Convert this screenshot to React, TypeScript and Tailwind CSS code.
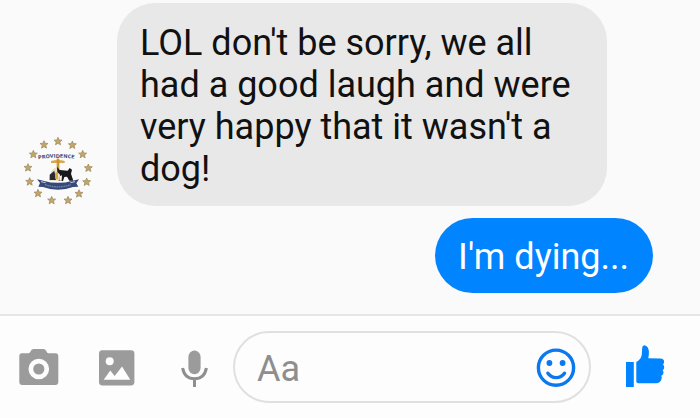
import { useState } from 'react';

type Message = {
  id: number;
  mine: boolean;
  text: string;
};

const messages: Message[] = [
  { id: 1, mine: false, text: "LOL don't be sorry, we all had a good laugh and were very happy that it wasn't a dog!" },
  { id: 2, mine: true, text: "I'm dying..." },
];

// centres of the thirteen stars around the seal
const stars = [
  [129, 46], [172, 57], [203, 85], [220, 126], [215, 168], [192, 203], [159, 223],
  [110, 223], [69, 202], [44, 167], [39, 125], [55, 85], [87, 56],
];

function SealAvatar() {
  return (
    <svg viewBox="24 30 210 210" className="h-[70px] w-[70px] shrink-0" role="img" aria-label="Providence">
      <path id="motto" d="M70 100 Q129 89 196 101" fill="none" />
      {stars.map(([x, y]) => (
        <path
          key={`${x}-${y}`}
          transform={`translate(${x} ${y})`}
          d="M0 -12 L3.3 -4.2 L12 -3.6 L5.4 2 L7.6 10.5 L0 6 L-7.6 10.5 L-5.4 2 L-12 -3.6 L-3.3 -4.2 Z"
          fill="#c4a762"
          stroke="#93835f"
          strokeWidth="2"
        />
      ))}
      <text fontSize="15" fontWeight="700" fill="#3f5380" fontFamily="'DejaVu Sans', sans-serif">
        <textPath href="#motto">PROVIDENCE</textPath>
      </text>
      <path d="M108 105 Q129 99 149 105 L149 111 L108 111 Z" fill="#d9a94c" />
      <path d="M125 98 H133 V134 H125 Z" fill="#c8963a" />
      <path d="M107 142 Q110 127 128 124 L131 164 H102 Z" fill="#e9dfc4" />
      <path d="M104 146 L118 134 L123 162 H104 Z" fill="#2b2b33" />
      <path d="M120 141 L129 138 L130 160 L121 159 Z" fill="#e2a93d" />
      <path d="M126 122 L134 132 L158 134 L164 126 L171 131 L168 143 L175 164 H163 L156 152 L148 153 L144 165 H131 L135 146 L127 138 Z" fill="#17171c" />
      <path d="M133 151 L141 148 L140 164 H133 Z" fill="#f6f1e2" />
      <path d="M66 160 L85 164 Q129 177 173 164 L192 160 L184 172 L190 182 L174 183 Q129 200 84 183 L70 182 L75 171 Z" fill="#35497a" />
      <path d="M90 176 Q129 189 168 176" fill="none" stroke="#7685a8" strokeWidth="4" strokeDasharray="5 2" />
      <path d="M78 167 L92 170 M166 170 L180 167" stroke="#c3cbdc" strokeWidth="3" />
    </svg>
  );
}

function CameraIcon() {
  return (
    <svg viewBox="0 0 40 40" className="h-10 w-10" aria-hidden="true">
      <path
        fill="#9b9b9b"
        fillRule="evenodd"
        d="M3 6.3 H9.5 Q11 6.3 11.5 4.5 Q12.2 2 14.5 2 H24.5 Q26.8 2 27.5 4.5 Q28 6.3 29.5 6.3 H36.3 Q39.3 6.3 39.3 9.3 V35 Q39.3 38 36.3 38 H3.3 Q0.3 38 0.3 35 V9.3 Q0.3 6.3 3 6.3 Z M19.8 11.7 A10.3 10.3 0 1 0 19.8 32.3 A10.3 10.3 0 1 0 19.8 11.7 Z"
      />
      <circle cx="19.8" cy="22" r="5.6" fill="#9b9b9b" />
    </svg>
  );
}

function PictureIcon() {
  return (
    <svg viewBox="0 0 40 40" className="h-10 w-10" aria-hidden="true">
      <rect x="2" y="3.3" width="35.4" height="35.2" rx="3.4" fill="#9b9b9b" />
      <circle cx="12.7" cy="14.3" r="4" fill="#fdfdfd" />
      <path d="M6.7 32.7 L13.3 23.5 L17.7 29 L25 19.5 L33.3 32.7 Z" fill="#fdfdfd" />
    </svg>
  );
}

function MicIcon() {
  return (
    <svg viewBox="0 0 40 40" className="h-10 w-10" aria-hidden="true">
      <rect x="13.4" y="3.6" width="12.2" height="23.6" rx="6.1" fill="#9b9b9b" />
      <path d="M7.6 21 C9 28.6 13.4 31.8 19.5 31.8 C25.6 31.8 30 28.6 31.4 21 M19.5 31.8 V40" fill="none" stroke="#8f8f8f" strokeWidth="3" />
    </svg>
  );
}

function SmileIcon() {
  return (
    <svg viewBox="0 0 40 40" className="h-10 w-10" aria-hidden="true">
      <g fill="none" stroke="#0a78ee" strokeWidth="3.4">
        <circle cx="20" cy="20.7" r="17.6" />
        <path d="M11.9 26.2 Q15 30.6 20.2 30.6 Q25.4 30.6 28.5 26.2" strokeLinecap="round" />
      </g>
      <circle cx="13.4" cy="16" r="2.9" fill="#0a78ee" />
      <circle cx="26.6" cy="16" r="2.9" fill="#0a78ee" />
    </svg>
  );
}

function LikeIcon() {
  return (
    <svg viewBox="0 0 40 40" className="h-10 w-10 overflow-visible" aria-hidden="true">
      <g fill="#0084ff">
        <path d="M1 15 H8.8 V40 H1 Z" />
        <path d="M11.3 15 Q16.3 12 16.8 7.5 L17.2 0.8 Q17.4 -1.7 19.3 -1.7 Q23.6 -0.6 23.9 4.5 Q24 8 23.3 11.2 L35.5 11.5 Q39 11.8 39.1 14.6 Q39.1 16.6 38 17.6 Q39.3 18.6 39.2 20.5 Q39 22.6 37.6 23.3 Q38.9 24.4 38.4 26.4 Q37.8 28.4 36.2 28.8 Q37.2 30.2 36.4 32.4 Q35 36 31.3 36.2 H13.3 Q11.3 36.2 11.3 34.5 Z" />
      </g>
    </svg>
  );
}

function MessageRow({ message }: { message: Message }) {
  if (message.mine) {
    return (
      <div className="flex justify-end pr-[47px]">
        <p className="rounded-full bg-[#0084ff] pt-[18px] pr-6 pb-[15px] pl-[23px] text-white">{message.text}</p>
      </div>
    );
  }

  return (
    <div className="flex items-end gap-6 pr-6 pl-[23px]">
      <SealAvatar />
      <p className="max-w-[490px] rounded-[38px] bg-[#e8e8e8] px-[23px] pt-[19px] pb-4 text-[#111]">{message.text}</p>
    </div>
  );
}

export default function App() {
  const [draft, setDraft] = useState('');

  return (
    <div className="flex min-h-screen flex-col bg-[#fafafa] font-[Roboto,sans-serif]">
      <main className="flex flex-1 flex-col gap-3 pt-[3px] pb-5 text-[36px] leading-[42px]">
        {messages.map((message) => (
          <MessageRow key={message.id} message={message} />
        ))}
      </main>

      <form
        onSubmit={(e) => { e.preventDefault(); setDraft(''); }}
        className="flex items-center border-t-2 border-[#e6e6e6] bg-[#fdfdfd] pt-[15px] pr-[35px] pb-[15px] pl-[19px]"
      >
        <div className="flex gap-[38px]">
          <button type="button" aria-label="Take a photo"><CameraIcon /></button>
          <button type="button" aria-label="Choose a picture"><PictureIcon /></button>
          <button type="button" aria-label="Record audio"><MicIcon /></button>
        </div>
        <div className="ml-[18px] flex h-[72px] min-w-0 flex-1 items-center rounded-full border-2 border-[#e0e0e0] pr-[13px] pl-[22px]">
          <input
            type="text"
            aria-label="Message"
            placeholder="Aa"
            value={draft}
            onChange={(e) => setDraft(e.target.value)}
            className="min-w-0 flex-1 bg-transparent pt-1 text-[36px] leading-[42px] text-[#111] outline-none placeholder:text-[#8e8e8e]"
          />
          <button type="button" aria-label="Emoji"><SmileIcon /></button>
        </div>
        <button type="submit" aria-label="Like" className="ml-[34px]"><LikeIcon /></button>
      </form>
    </div>
  );
}
